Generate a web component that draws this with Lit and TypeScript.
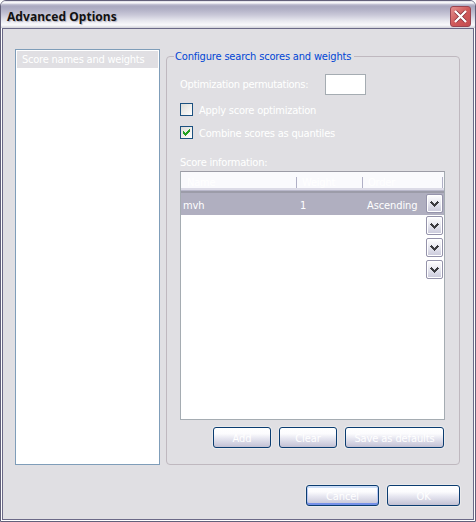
import { LitElement, html, css, svg } from "lit";
import { customElement, property } from "lit/decorators.js";
import { classMap } from "lit/directives/class-map.js";

@customElement("xp-button")
class XpButton extends LitElement {
  @property({ type: Boolean }) primary = false;
  static styles = css`
    :host { display: block; height: 21px; }
    .btn {
      box-sizing: border-box; width: 100%; height: 21px; padding: 2px 0 0;
      border: 1px solid #0b3c70; border-radius: 3px; color: #fff;
      background: linear-gradient(#fff 0, #fcfcfe 30%, #e6e6f0 55%, #cccbdc 88%, #c2c0d2 100%);
      box-shadow: 0 0 0 1px #e9e9eb;
      font: 11px/18px "DejaVu Sans Condensed", "DejaVu Sans", sans-serif; letter-spacing: -.1px;
      display: block; text-align: center; white-space: nowrap;
    }
    .primary { box-shadow: inset 0 2px #cedff8, inset 0 -2px #7590e8, inset 1px 0 #b8c8f4, inset -1px 0 #b8c8f4, 0 0 0 1px #e9e9eb; }
  `;
  render() {
    return html`<button class=${classMap({ btn: true, primary: this.primary })}><slot></slot></button>`;
  }
}

@customElement("xp-check")
class XpCheck extends LitElement {
  @property({ type: Boolean }) checked = false;
  static styles = css`
    :host { display: flex; height: 13px; align-items: center; color: #fff; white-space: nowrap; }
    .box { width: 11px; height: 11px; border: 1px solid #1c5180; background: linear-gradient(135deg, #dcdcd7, #fff); margin-right: 6px; flex: none; }
    .label { padding-top: 2px; }
    svg { display: block; }
  `;
  render() {
    return html`<span class="box">${this.checked
      ? html`<svg width="11" height="11" shape-rendering="crispEdges">${svg`<path fill="#21a121" d="M2 4h1v3h-1zM3 5h1v3h-1zM4 6h1v3h-1zM5 5h1v3h-1zM6 4h1v3h-1zM7 3h1v3h-1zM8 2h1v3h-1z"/>`}</svg>`
      : ""}</span><span class="label"><slot></slot></span>`;
  }
}

@customElement("xp-drop")
class XpDrop extends LitElement {
  static styles = css`
    :host { display: block; height: 22px; }
    .drop {
      box-sizing: border-box; width: 17px; height: 19px; border: 1px solid #9593ab; border-radius: 2px;
      background: linear-gradient(#fff, #e6e6ef 50%, #c9c8da); box-shadow: inset 0 0 0 1px #fff;
      display: grid; place-items: center;
    }
    svg { display: block; }
  `;
  render() {
    return html`<div class="drop"><svg width="9" height="6" shape-rendering="crispEdges">
      <path fill="#3c3c40" d="M0 1h1v-1h1v1h1v1h1v1h1v-1h1v-1h1v-1h1v1h1v1h-1v1h-1v1h-1v1h-1v1h-1v-1h-1v-1h-1v-1h-1v-1h-1z"/></svg></div>`;
  }
}

@customElement("app-root")
class AppRoot extends LitElement {
  static styles = css`
    :host { display: block; width: 476px; height: 522px; overflow: hidden; background: #fff;
      font: 11px/14px "DejaVu Sans Condensed", "DejaVu Sans", sans-serif; color: #fff; letter-spacing: -.22px; }
    * { box-sizing: border-box; }
    .window { width: 476px; height: 522px; display: flex; flex-direction: column;
      border: 1px solid #62607a; border-radius: 6px 6px 0 0; background: #fff; overflow: hidden; padding: 0 1px 1px; }
    .title { height: 27px; flex: none; margin: 0 -1px; padding: 1px 4px 0 6px; display: flex; justify-content: space-between; align-items: center;
      background: linear-gradient(#dcdbe6 0, #fff 2px, #c8c7d8 3px, #a9a8c0 5px, #b0afc5 8px, #c9c8d8 14px, #e4e4ec 19px, #fafafc 24px, #d0d0d8 27px); }
    .caption { color: #111; font: bold 12px/16px "Noto Sans", "Open Sans", sans-serif; white-space: nowrap; letter-spacing: .05px; margin-top: 3px; text-shadow: 1px 1px 1px #b0afc0; }
    .close { width: 21px; height: 21px; border: 1px solid #9a4450; border-radius: 3px; margin-top: 2px; display: grid; place-items: center;
      background: linear-gradient(135deg, #e29090, #d05a5a 50%, #c44c50); }
    .close svg { display: block; }
    .client { flex: 1; border: 1px solid #6b6987; background: #e0dfe3; display: flex; flex-direction: column; padding: 20px 13px 13px 12px; }
    .main { display: flex; height: 416px; gap: 6px; }
    .list { width: 145px; height: 416px; border: 1px solid #7f9db9; background: #fff; padding: 1px; }
    .item { height: 17px; background: #e0dfe3; padding-left: 5px; line-height: 18px; white-space: nowrap; }
    .group { width: 294px; height: 409px; margin: 7px 0 0; padding: 0 0 0 13px; border: 1px solid #bfb8bf; border-radius: 4px; display: flex; flex-direction: column; }
    .legend { color: #0046d5; background: #e0dfe3; height: 14px; line-height: 15px; margin: -8px 0 0 -6px; padding: 0 3px 0 1px; align-self: flex-start; white-space: nowrap; letter-spacing: -.17px; }
    .perm { display: flex; align-items: center; height: 21px; margin-top: 11px; white-space: nowrap; letter-spacing: -.3px; }
    .perm span { width: 145px; }
    .field { width: 41px; height: 21px; border: 1px solid #a5acb2; background: #fff; }
    .c1 { margin-top: 8px; }
    .c2 { margin-top: 10px; }
    .info { height: 14px; margin-top: 16px; line-height: 16px; white-space: nowrap; }
    .table { width: 265px; height: 249px; margin-top: 2px; border: 1px solid #a5acb2; border-top-color: #9c9ca6; background: #fff; }
    .head { display: grid; grid-template-columns: 115px 66px 80px; height: 21px; padding: 5px 0 0 1px; color: #fff; line-height: 12px;
      background: linear-gradient(#fafafd 0 16px, #dcdbe7 16px 18px, #b8b7ca 18px 19px, #9c9ca9 19px); }
    .head span { height: 11px; border-right: 1px solid #b0b0c6; padding-left: 5px; }
    .body { display: grid; grid-template-columns: 245px 17px; height: 90px; align-items: start; }
    .row { display: grid; grid-template-columns: 117px 67px 61px; width: 263px; height: 22px; background: #b0afc0; line-height: 25px; padding-left: 2px; letter-spacing: -.1px; }
    .drops { padding-top: 1px; }
    .b1 { display: grid; grid-template-columns: 58px 58px 99px; gap: 8px; margin: 7px 0 0 33px; }
    .b2 { display: grid; grid-template-columns: 73px 73px; gap: 8px; justify-content: end; margin-top: 20px; }
  `;
  render() {
    return html`<div class="window">
      <div class="title"><span class="caption">Advanced Options</span>
        <div class="close"><svg width="13" height="13"><path d="M1.5 1.5L11.5 11.5M11.5 1.5L1.5 11.5" stroke="#7c2b38" stroke-width="3.6"/><path d="M1 1L12 12M12 1L1 12" stroke="#fff" stroke-width="2.3"/></svg></div>
      </div>
      <div class="client">
        <div class="main">
          <div class="list"><div class="item">Score names and weights</div></div>
          <div class="group">
            <div class="legend">Configure search scores and weights</div>
            <div class="perm"><span>Optimization permutations:</span><div class="field"></div></div>
            <xp-check class="c1">Apply score optimization</xp-check>
            <xp-check class="c2" checked>Combine scores as quantiles</xp-check>
            <div class="info">Score information:</div>
            <div class="table">
              <div class="head"><span>Name</span><span>Weight</span><span>Order</span></div>
              <div class="body">
                <div class="row"><span>mvh</span><span>1</span><span>Ascending</span></div>
                <div class="drops"><xp-drop></xp-drop><xp-drop></xp-drop><xp-drop></xp-drop><xp-drop></xp-drop></div>
              </div>
            </div>
            <div class="b1"><xp-button>Add</xp-button><xp-button>Clear</xp-button><xp-button>Save as defaults</xp-button></div>
          </div>
        </div>
        <div class="b2"><xp-button primary>Cancel</xp-button><xp-button>OK</xp-button></div>
      </div>
    </div>`;
  }
}
